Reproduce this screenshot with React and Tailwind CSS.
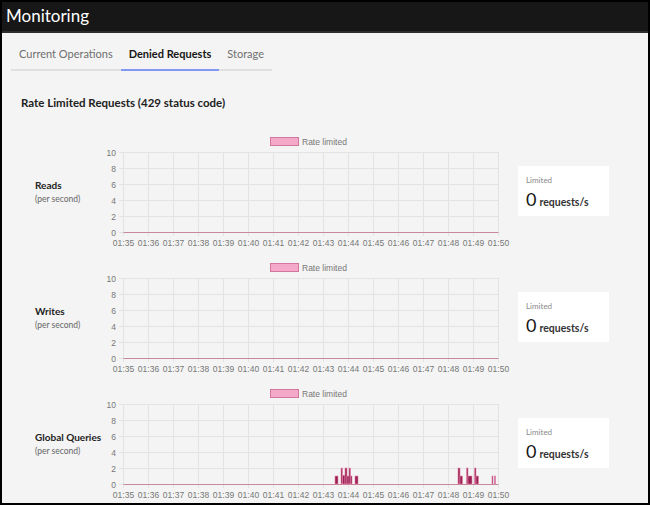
const TIMES = ['01:35', '01:36', '01:37', '01:38', '01:39', '01:40', '01:41', '01:42', '01:43', '01:44', '01:45', '01:46', '01:47', '01:48', '01:49', '01:50']
const TICKS = [10, 8, 6, 4, 2, 0]

// spikes for global queries: [x from, x to, value] in page px
const SPIKES = [
  [335, 338, 1], [341, 342.5, 2], [342.5, 345, 1.1], [345, 347, 2], [347, 352, 1], [349, 350.5, 2],
  [355, 358, 1], [458, 460, 2], [460, 462.5, 1], [466.5, 468, 2], [468, 472, 1], [474.5, 476, 2],
  [476, 478.5, 1], [492, 493, 1], [494.5, 495.5, 1],
]

const x0 = 23.5
const step = 25
const yOf = v => 101 - 8 * v

function Chart({ spikes = [] }) {
  return (
    <svg width="410" height="126" className="shrink-0" style={{ fontFamily: '"Liberation Sans", Arial, sans-serif' }}>
      {/* legend */}
      <rect x="170.5" y="6.5" width="28" height="8" fill="#f5a9c9" stroke="#d2769d" />
      <text x="202" y="13.5" fontSize="8.5" fill="#777">Rate limited</text>

      {/* grid */}
      {TICKS.map((t, i) => (
        <g key={t}>
          <line x1="19" x2="398.5" y1={21.5 + 16 * i} y2={21.5 + 16 * i} stroke="#e3e3e3" />
          <text x="16" y={24.5 + 16 * i} fontSize="8.5" fill="#777" textAnchor="end">{t}</text>
        </g>
      ))}
      {TIMES.map((t, i) => (
        <g key={t}>
          <line x1={x0 + step * i} x2={x0 + step * i} y1="21" y2="105" stroke="#e3e3e3" />
          <text x={x0 + step * i} y="115" fontSize="8.5" fill="#777" textAnchor="middle">{t}</text>
        </g>
      ))}

      {spikes.map(([a, b, v], i) => (
        <rect key={i} x={a - 100} y={yOf(v)} width={b - a} height={101 - yOf(v)} fill="#9a1f50" stroke="#e58ab2" strokeWidth="0.6" />
      ))}

      <line x1={x0} x2="398.5" y1="101.5" y2="101.5" stroke="#c9889a" />
    </svg>
  )
}

function Row({ title, spikes }) {
  return (
    <div className="flex h-[126px] shrink-0">
      <div className="w-[98px] shrink-0 pl-[33px] pt-[47px] whitespace-nowrap">
        <div className="text-[10px] font-bold text-[#222] leading-[14px]">{title}</div>
        <div className="text-[8.5px] text-[#666] leading-[12px] mt-[1px]">(per second)</div>
      </div>
      <Chart spikes={spikes} />
      <div className="ml-[8px] mt-[35px] w-[91px] h-[50px] bg-white px-[8px] pt-[9px] shrink-0">
        <div className="text-[8px] text-[#8a8a8a] leading-[10px]">Limited</div>
        <div className="flex items-baseline gap-[3px] mt-[3px] whitespace-nowrap">
          <span className="text-[18px] text-[#161616] leading-[22px]">0</span>
          <span className="text-[10.5px] text-[#333] font-bold">requests/s</span>
        </div>
      </div>
    </div>
  )
}

export default function App() {
  return (
    <div className="w-[650px] h-[505px] border-2 border-black bg-[#f4f4f4] overflow-hidden flex flex-col" style={{ fontFamily: 'Lato, "Noto Sans", Arial, sans-serif' }}>
      <div className="h-[31px] shrink-0 bg-[#171717] border-b-2 border-[#2e2e2e] flex items-center pl-[4px] pb-[3px]">
        <span className="text-[17px] text-white leading-none">Monitoring</span>
      </div>

      {/* Tabs */}
      <div className="mt-[4px] ml-[9px] self-start flex border-b-2 border-[#e0e0e0] shrink-0 whitespace-nowrap">
        {['Current Operations', 'Denied Requests', 'Storage'].map(t => (
          <div
            key={t}
            className={`h-[34px] px-[8px] pt-[3px] flex items-center text-[11px] -mb-[2px] border-b-2 ${
              t === 'Denied Requests' ? 'text-[#161616] font-bold border-[#8198f5]' : 'text-[#6f6f6f] border-transparent'
            }`}
          >
            {t}
          </div>
        ))}
      </div>

      <div className="ml-[19px] mt-[24px] text-[11.5px] font-bold text-[#222] leading-[16px] shrink-0">
        Rate Limited Requests (429 status code)
      </div>

      <div className="mt-[20px] flex flex-col">
        <Row title="Reads" />
        <Row title="Writes" />
        <Row title="Global Queries" spikes={SPIKES} />
      </div>
    </div>
  )
}
